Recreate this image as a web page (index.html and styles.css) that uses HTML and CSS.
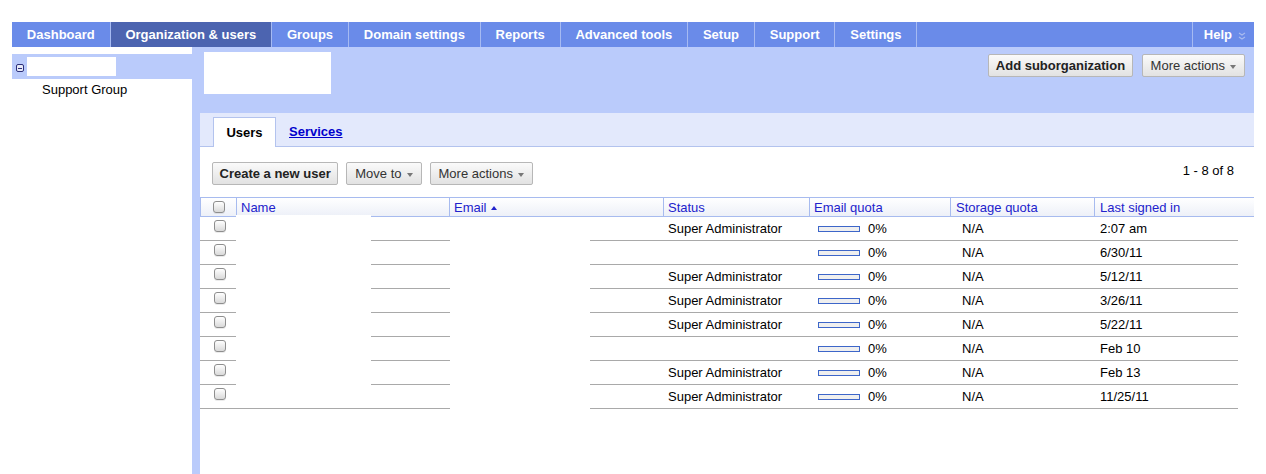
FILE: index.html
```html
<!DOCTYPE html>
<html>
<head>
<meta charset="utf-8">
<title>Organization &amp; users</title>
<link rel="stylesheet" href="styles.css">
</head>
<body>
<div class="page">
  <nav class="topnav">
    <a class="tab">Dashboard</a>
    <a class="tab active">Organization &amp; users</a>
    <a class="tab">Groups</a>
    <a class="tab">Domain settings</a>
    <a class="tab">Reports</a>
    <a class="tab">Advanced tools</a>
    <a class="tab">Setup</a>
    <a class="tab">Support</a>
    <a class="tab">Settings</a>
    <span class="nav-spacer"></span>
    <a class="tab help">Help
      <svg class="chev" width="8" height="8" viewBox="0 0 8 8"><path d="M1 1 L4 3 L7 1 M1 5 L4 7 L7 5" fill="none" stroke="#a9bbef" stroke-width="1.2"/></svg>
    </a>
  </nav>
  <div class="main">
    <aside class="sidebar">
      <div class="tree-root"><span class="toggle"></span><span class="org-name"></span></div>
      <div class="tree-child">Support Group</div>
    </aside>
    <section class="content">
      <div class="org-header">
        <div class="logo-box"></div>
        <div class="org-actions">
          <button class="btn bold">Add suborganization</button>
          <button class="btn">More actions<span class="caret"></span></button>
        </div>
      </div>
      <div class="panel">
        <div class="subtabs">
          <span class="subtab active">Users</span>
          <a class="subtab link">Services</a>
        </div>
        <div class="panel-body">
          <div class="toolbar">
            <button class="btn bold">Create a new user</button>
            <button class="btn">Move to<span class="caret"></span></button>
            <button class="btn">More actions<span class="caret"></span></button>
            <span class="pager">1 - 8 of 8</span>
          </div>
          <div class="grid">
            <div class="hrow">
              <div class="hc cbcell"><span class="cb"></span></div>
              <div class="hc">Name</div>
              <div class="hc">Email<span class="sort"></span></div>
              <div class="hc">Status</div>
              <div class="hc">Email quota</div>
              <div class="hc st">Storage quota</div>
              <div class="hc ls">Last signed in</div>
            </div>
            <div class="row"><div class="cbcell"><span class="cb"></span></div><div></div><div></div><div class="status">Super Administrator</div><div class="quota"><span class="bar"></span>0%</div><div class="na">N/A</div><div class="last">2:07 am</div></div>
            <div class="row"><div class="cbcell"><span class="cb"></span></div><div></div><div></div><div class="status"></div><div class="quota"><span class="bar"></span>0%</div><div class="na">N/A</div><div class="last">6/30/11</div></div>
            <div class="row"><div class="cbcell"><span class="cb"></span></div><div></div><div></div><div class="status">Super Administrator</div><div class="quota"><span class="bar"></span>0%</div><div class="na">N/A</div><div class="last">5/12/11</div></div>
            <div class="row"><div class="cbcell"><span class="cb"></span></div><div></div><div></div><div class="status">Super Administrator</div><div class="quota"><span class="bar"></span>0%</div><div class="na">N/A</div><div class="last">3/26/11</div></div>
            <div class="row"><div class="cbcell"><span class="cb"></span></div><div></div><div></div><div class="status">Super Administrator</div><div class="quota"><span class="bar"></span>0%</div><div class="na">N/A</div><div class="last">5/22/11</div></div>
            <div class="row"><div class="cbcell"><span class="cb"></span></div><div></div><div></div><div class="status"></div><div class="quota"><span class="bar"></span>0%</div><div class="na">N/A</div><div class="last">Feb 10</div></div>
            <div class="row"><div class="cbcell"><span class="cb"></span></div><div></div><div></div><div class="status">Super Administrator</div><div class="quota"><span class="bar"></span>0%</div><div class="na">N/A</div><div class="last">Feb 13</div></div>
            <div class="row"><div class="cbcell"><span class="cb"></span></div><div></div><div></div><div class="status">Super Administrator</div><div class="quota"><span class="bar"></span>0%</div><div class="na">N/A</div><div class="last">11/25/11</div></div>
            <div class="redact redact-name"></div>
            <div class="redact redact-email"></div>
          </div>
        </div>
      </div>
    </section>
  </div>
</div>
</body>
</html>
```

FILE: styles.css
```css
* { box-sizing: border-box; }
html, body { margin: 0; padding: 0; background: #fff; }
body {
  font-family: "Liberation Sans", Arial, sans-serif;
  font-size: 13px;
  color: #000;
  overflow: hidden;
}
.page {
  width: 1242px;
  margin: 22px 0 0 12px;
}

/* top navigation */
.topnav {
  display: flex;
  height: 25px;
  background: #6a8be9;
}
.tab {
  display: flex;
  align-items: center;
  padding: 0 14.85px;
  color: #fff;
  font-weight: bold;
  font-size: 13px;
  border-right: 1px solid #a6baf2;
  white-space: nowrap;
}
.tab.active { background: #4c64b0; }
.nav-spacer { flex: 1; border-right: 1px solid #a6baf2; }
.tab.help { border-right: none; padding: 0 8px 0 11px; }
.chev { margin-left: 6px; margin-top: 2px; }

/* main */
.main {
  display: flex;
  height: 427px;
}
.sidebar {
  width: 180px;
  background: #fff;
  padding-top: 7px;
}
.tree-root {
  display: flex;
  align-items: center;
  height: 25px;
  background: #bacbfb;
  padding-left: 4px;
}
.toggle {
  position: relative;
  width: 8px;
  height: 8px;
  border: 1px solid #2c2f7a;
  border-radius: 2px;
  background: #e6eaf8;
  margin-top: 3px;
}
.toggle::after {
  content: "";
  position: absolute;
  left: 1px;
  right: 1px;
  top: 2.5px;
  height: 1px;
  background: #2c2f7a;
}
.org-name {
  width: 89px;
  height: 19px;
  background: #fff;
  margin-left: 3px;
}
.tree-child {
  padding: 3px 0 0 30px;
  line-height: 15px;
}

.content {
  flex: 1;
  display: flex;
  flex-direction: column;
  background: #bacbfb;
}
.org-header {
  height: 66px;
  display: flex;
  padding: 5px 9px 0 12px;
}
.logo-box {
  width: 127px;
  height: 42px;
  background: #fff;
}
.org-actions {
  margin-left: auto;
  display: flex;
  gap: 9px;
  margin-top: 2px;
  height: 23px;
}

/* buttons */
.btn {
  display: inline-flex;
  align-items: center;
  height: 23px;
  padding: 0 8px;
  font-family: "Liberation Sans", Arial, sans-serif;
  font-size: 13px;
  color: #333;
  border: 1px solid #b7b7b7;
  border-radius: 2px;
  background: linear-gradient(#fafafa, #e2e2e2);
  white-space: nowrap;
}
.btn.bold { font-weight: bold; color: #222; padding: 0 6.5px; }
.caret {
  display: inline-block;
  margin-left: 5px;
  margin-top: 2px;
  border-left: 3.5px solid transparent;
  border-right: 3.5px solid transparent;
  border-top: 4px solid #777;
}

/* panel */
.panel {
  flex: 1;
  margin-left: 8px;
  background: #fff;
  display: flex;
  flex-direction: column;
}
.subtabs {
  height: 34px;
  background: #e3e9fc;
  border-bottom: 1px solid #b3c3ee;
  display: flex;
  align-items: flex-end;
  padding-left: 13px;
}
.subtab {
  font-weight: bold;
  font-size: 13px;
}
.subtab.active {
  width: 63px;
  height: 30px;
  margin-bottom: -1px;
  background: #fff;
  border: 1px solid #b3c3ee;
  border-bottom: none;
  display: flex;
  align-items: center;
  justify-content: center;
  color: #000;
  padding-bottom: 1px;
}
.subtab.link {
  color: #0000cc;
  text-decoration: underline;
  margin-left: 13px;
  align-self: center;
  margin-top: 3px;
}
.panel-body {
  padding-top: 15px;
}
.toolbar {
  display: flex;
  align-items: center;
  gap: 8px;
  padding: 0 20px 0 12px;
  height: 23px;
}
.pager {
  margin-left: auto;
  margin-top: -7px;
}

/* grid */
.grid {
  position: relative;
  margin-top: 12px;
}
.hrow {
  display: grid;
  grid-template-columns: 36px 213px 214px 146px 141px 144px 159px;
  width: 1054px;
  height: 20px;
  border-top: 1px solid #a7bbef;
  border-bottom: 1px solid #a7bbef;
  border-left: 1px solid #a7bbef;
  background: linear-gradient(#ffffff, #edf0f8);
}
.hc {
  display: flex;
  align-items: center;
  padding-left: 4px;
  color: #2222cc;
  border-right: 1px solid #a7bbef;
  white-space: nowrap;
}
.hc.st { padding-left: 5px; }
.hc.ls { border-right: none; padding-left: 5px; }
.sort {
  display: inline-block;
  margin-left: 4px;
  margin-top: 2px;
  border-left: 3.5px solid transparent;
  border-right: 3.5px solid transparent;
  border-bottom: 4px solid #2222cc;
}
.hc.cbcell { padding-left: 12px; }
.cb {
  display: inline-block;
  width: 12px;
  height: 12px;
  border: 1px solid #8e8e8e;
  border-radius: 3px;
  background: linear-gradient(#ffffff, #d9d9d9);
  box-shadow: 0 1px 0 rgba(0,0,0,0.08);
}
.row {
  display: grid;
  grid-template-columns: 36px 213px 214px 146px 141px 144px 144px;
  width: 1038px;
  height: 24px;
  border-bottom: 1px solid #a9a9a9;
  align-items: center;
}
.row .cbcell { padding-left: 14px; display: flex; align-items: center; margin-top: -5px; }
.row > div { white-space: nowrap; }
.status { padding-left: 5px; }
.quota { padding-left: 9px; display: flex; align-items: center; }
.bar {
  display: inline-block;
  width: 42px;
  height: 6px;
  border: 1px solid #3d66c9;
  background: #efefef;
  margin-right: 8px;
  margin-top: 1px;
}
.na { padding-left: 12px; }
.last { padding-left: 6px; }

/* redacted areas (overlay) */
.redact {
  position: absolute;
  background: #fff;
}
.redact-name {
  left: 36px;
  top: 18px;
  width: 135px;
  height: 170px;
}
.redact-email {
  left: 250px;
  top: 21px;
  width: 140px;
  height: 196px;
}
```
